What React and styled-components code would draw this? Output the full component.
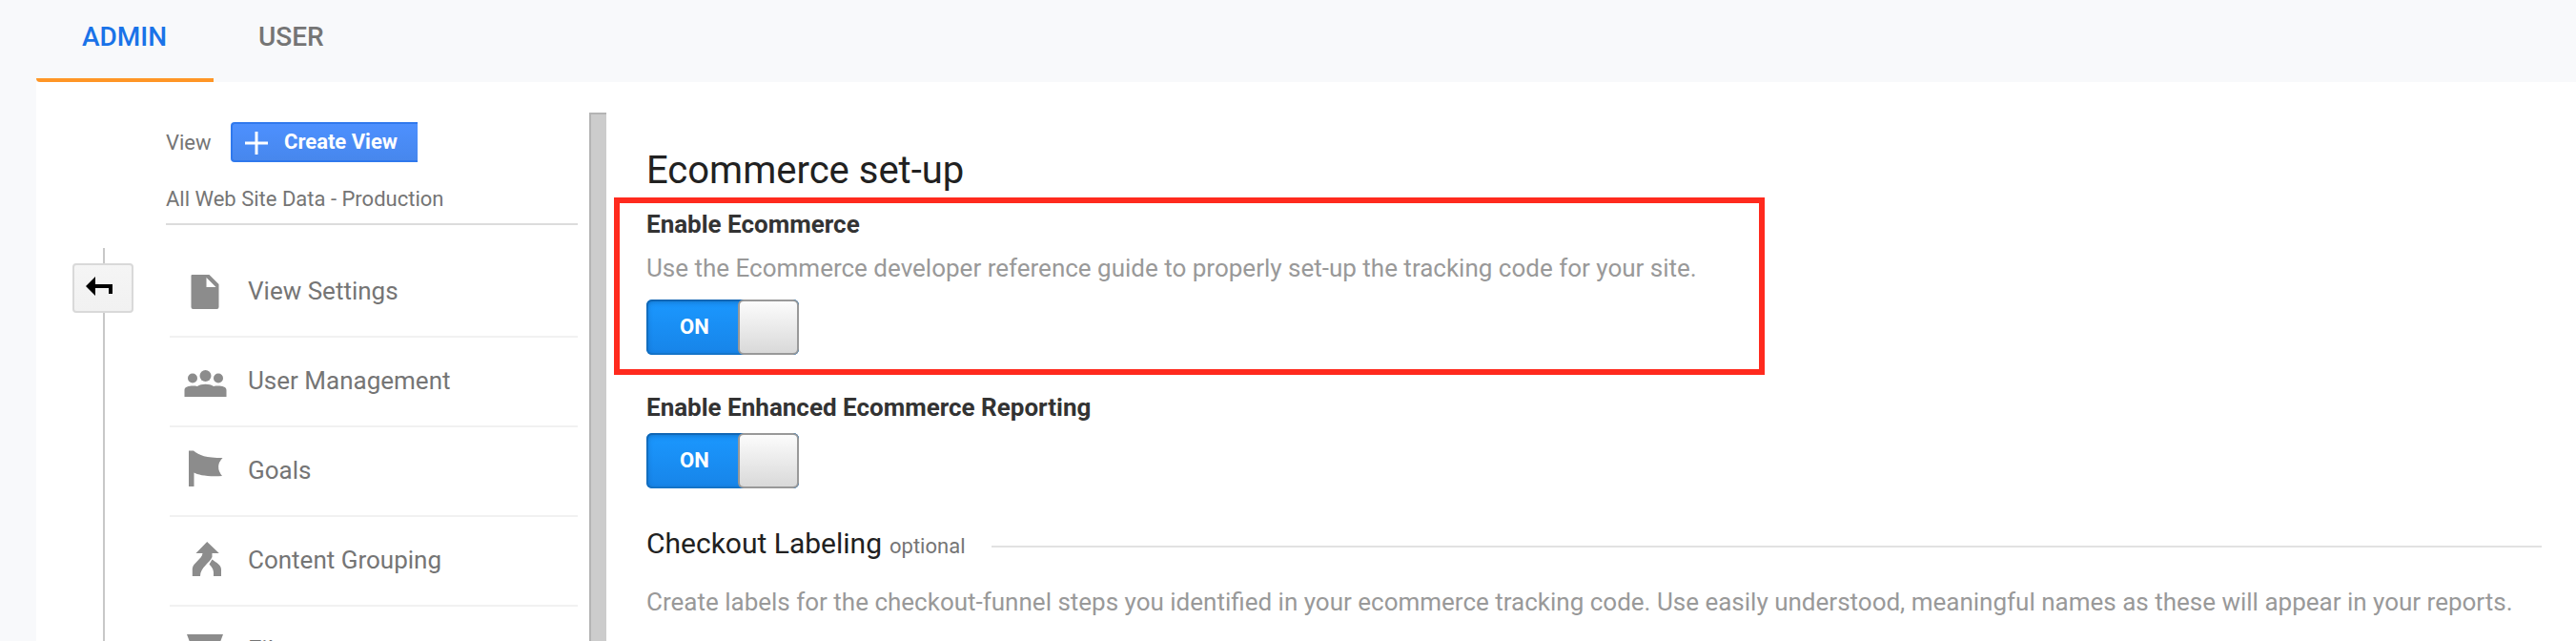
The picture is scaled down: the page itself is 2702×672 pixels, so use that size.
import React from "react";
import styled, { createGlobalStyle, css } from "styled-components";

const Global = createGlobalStyle`
  * { box-sizing: border-box; }
  body { margin: 0; background: #f8f9fb; font-family: Roboto, "Liberation Sans", sans-serif; }
`;

const Page = styled.div`
  height: 672px;
  overflow: hidden;
  display: flex;
  flex-direction: column;
  padding-left: 38px;
`;

const Tabs = styled.nav`
  display: flex;
  flex: none;
  height: 86px;
`;

const Tab = styled.a`
  padding: 0 47px;
  line-height: 77px;
  font-size: 28px;
  font-weight: 500;
  color: #757575;
  border-bottom: 4px solid transparent;
  ${(p) =>
    p.$active &&
    css`
      width: 186px;
      padding-left: 48px;
      color: #1a73e8;
      border-bottom-color: #ff9626;
      border-bottom-left-radius: 4px;
    `}
`;

const Panel = styled.main`
  flex: 1;
  min-height: 0;
  display: flex;
  background: #fff;
`;

const Rail = styled.div`
  width: 136px;
  flex: none;
  padding: 174px 34px 0 38px;
  display: flex;
  flex-direction: column;
  align-items: center;
`;

const RailLine = styled.div`
  width: 2px;
  margin-left: 2px;
  background: #c8c8c8;
  ${(p) => (p.$grow ? "flex: 1;" : "height: 16px;")}
`;

const BackButton = styled.button`
  width: 64px;
  height: 52px;
  padding: 0;
  border: 2px solid #d9d9d9;
  border-radius: 4px;
  background: linear-gradient(#f5f5f5, #f1f1f1);
  display: flex;
  svg { display: block; }
`;

const ViewColumn = styled.section`
  width: 432px;
  flex: none;
  padding-top: 42px;
`;

const ViewHead = styled.div`
  display: flex;
  align-items: center;
  height: 42px;
  font-size: 22px;
  color: #757575;
`;

const HeadLabel = styled.span`
  width: 68px;
`;

const CreateButton = styled.button`
  display: flex;
  align-items: center;
  width: 196px;
  height: 42px;
  padding: 0 0 0 13px;
  gap: 17px;
  border: 2px solid #3079ed;
  border-right: 0;
  border-radius: 4px 0 0 4px;
  background: linear-gradient(#4d90fe, #4787ed);
  font: 700 22px/38px Roboto, sans-serif;
  color: #fff;
  white-space: nowrap;
  svg { margin-top: 2px; }
`;

const ViewName = styled.div`
  height: 66px;
  padding-top: 13px;
  line-height: 52px;
  font-size: 22px;
  color: #757575;
  border-bottom: 2px solid #dcdcdc;
`;

const Menu = styled.ul`
  list-style: none;
  margin: 24px 0 0 4px;
  padding: 0;
`;

const MenuRow = styled.li`
  display: flex;
  height: 94px;
  padding-left: 12px;
  gap: 20px;
  line-height: 90px;
  font-size: 26px;
  color: #757575;
  border-bottom: 2px solid #f1f1f1;
  svg { flex: none; display: block; }
`;

const Scrollbar = styled.div`
  width: 18px;
  flex: none;
  margin: 32px 0 0 12px;
  background: #ccc;
  border-left: 2px solid #b4b4b4;
  border-top: 2px solid #b4b4b4;
`;

const Content = styled.section`
  flex: 1;
  padding: 69px 36px 0 8px;
`;

const Title = styled.h1`
  margin: 0 0 4px 34px;
  font-size: 40px;
  line-height: 48px;
  font-weight: 400;
  color: #212121;
`;

const Highlight = styled.div`
  width: 1207px;
  height: 186px;
  padding: 7px 0 0 28px;
  border: 6px solid #ff2a1e;
`;

const Group = styled.div`
  padding: 19px 0 0 34px;
`;

const Label = styled.h2`
  margin: 0;
  font-size: 26px;
  line-height: 30px;
  font-weight: 700;
  color: #333;
`;

const Description = styled.p`
  margin: ${(p) => p.$top}px 0 0;
  font-size: 26px;
  line-height: 30px;
  color: #999;
  white-space: nowrap;
`;

const Switch = styled.div`
  display: flex;
  width: 160px;
  height: 58px;
  margin-top: ${(p) => p.$top}px;
  border-radius: 6px;
  background: linear-gradient(#1b98ff, #1784e8);
  box-shadow: inset 0 2px 6px rgba(0, 40, 90, 0.4), inset 0 0 0 2px #167bd2;
`;

const SwitchText = styled.span`
  width: 96px;
  padding-left: 35px;
  line-height: 57px;
  font-size: 22px;
  font-weight: 700;
  color: #fff;
`;

const Knob = styled.span`
  width: 64px;
  border: 2px solid #999;
  border-radius: 6px;
  background: linear-gradient(#fcfcfc, #d9d9d9);
`;

const SectionHead = styled.div`
  display: flex;
  align-items: baseline;
  margin-top: 40px;
  height: 36px;
`;

const SectionTitle = styled.h3`
  margin: 0;
  font-size: 30px;
  line-height: 36px;
  font-weight: 400;
  color: #212121;
`;

const Optional = styled.span`
  margin-left: 8px;
  font-size: 22px;
  color: #757575;
`;

const Rule = styled.div`
  flex: 1;
  align-self: flex-start;
  height: 2px;
  margin: 20px 0 0 28px;
  background: #e2e2e2;
`;

const icons = {
  file: <path fillRule="evenodd" d="M201.500 288H219.500L229.500 298V322a2 2 0 0 1-2 2H202.500a2 2 0 0 1-2-2V289a1 1 0 0 1 1-1ZM216.500 291V301H226.500Z" />,
  users: (
    <>
      <circle cx="202" cy="302.500" r="5" />
      <circle cx="215.500" cy="300" r="6" />
      <circle cx="229" cy="302.500" r="5" />
      <path d="M193.500 322V315C193.500 310.500 202 310 207 311C211 308 220 308 224 311C229 310 237.500 310.500 237.500 315V322Z" />
    </>
  ),
  flag: <path d="M198 284.500H203C209 289.500 216 292 233.500 292Q225 301 233 311C218 312 208 310 203.500 307.500V322H198Z" />,
  merge: (
    <>
      <path d="M217.200 286L229.800 298H222.500V302C220 308 210 313 210 322H201.800V314C202.500 308 212 304 212.500 298H205.500Z" />
      <path d="M222.500 304.500C227 308 232 310 232 315V322H224V318C223.500 313 221 311.500 219.500 309.500Z" />
    </>
  ),
  filter: <path d="M196 289H234L231 297L219 310V324H211V310L199 297Z" />,
};

const menu = [
  ["file", "View Settings"],
  ["users", "User Management"],
  ["flag", "Goals"],
  ["merge", "Content Grouping"],
  ["filter", "Filters"],
];

const MenuIcon = ({ name }) => (
  <svg width="50" height="92" viewBox="190 260 50 92" fill="#8c8c8c">
    {icons[name]}
  </svg>
);

const Toggle = ({ top }) => (
  <Switch $top={top} role="switch" aria-checked="true">
    <SwitchText>ON</SwitchText>
    <Knob />
  </Switch>
);

export default function App() {
  return (
    <>
      <Global />
      <Page>
        <Tabs>
          <Tab $active>ADMIN</Tab>
          <Tab>USER</Tab>
        </Tabs>
        <Panel>
          <Rail>
            <RailLine />
            <BackButton aria-label="Back">
              <svg width="60" height="48" viewBox="78 278 60 48">
                <path d="M90 300L100 290V298H118V308H114V302H100V310Z" />
              </svg>
            </BackButton>
            <RailLine $grow />
          </Rail>
          <ViewColumn>
            <ViewHead>
              <HeadLabel>View</HeadLabel>
              <CreateButton>
                <svg width="24" height="24" viewBox="0 0 24 24" fill="#fff">
                  <path d="M10.500 0H13.500V10.500H24V13.500H13.500V24H10.500V13.500H0V10.500H10.500Z" />
                </svg>
                Create View
              </CreateButton>
            </ViewHead>
            <ViewName>All Web Site Data - Production</ViewName>
            <Menu>
              {menu.map(([icon, text]) => (
                <MenuRow key={icon}>
                  <MenuIcon name={icon} />
                  <span>{text}</span>
                </MenuRow>
              ))}
            </Menu>
          </ViewColumn>
          <Scrollbar />
          <Content>
            <Title>Ecommerce set-up</Title>
            <Highlight>
              <Label>Enable Ecommerce</Label>
              <Description $top={16}>
                Use the Ecommerce developer reference guide to properly set-up the tracking code for your site.
              </Description>
              <Toggle top={18} />
            </Highlight>
            <Group>
              <Label>Enable Enhanced Ecommerce Reporting</Label>
              <Toggle top={12} />
              <SectionHead>
                <SectionTitle>Checkout Labeling</SectionTitle>
                <Optional>optional</Optional>
                <Rule />
              </SectionHead>
              <Description $top={28}>
                Create labels for the checkout-funnel steps you identified in your ecommerce tracking code. Use easily
                understood, meaningful names as these will appear in your reports.
              </Description>
            </Group>
          </Content>
        </Panel>
      </Page>
    </>
  );
}
